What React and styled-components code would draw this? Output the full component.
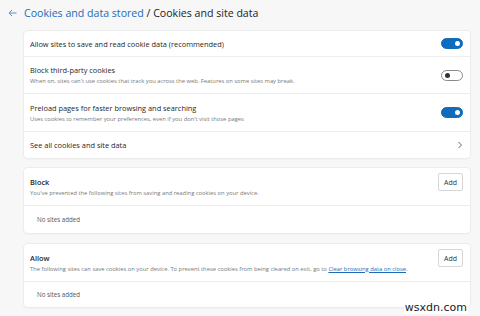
import React from "react";
import styled, { createGlobalStyle } from "styled-components";

const Global = createGlobalStyle`
  html, body {
    margin: 0;
    padding: 0;
    background: #f7f7f7;
    font-family: "Open Sans", "Noto Sans", sans-serif;
    color: #1b1b1b;
  }
  * { box-sizing: border-box; }
`;

const Page = styled.div`
  position: relative;
  width: 480px;
  height: 316px;
  overflow: hidden;
  padding: 0 10px 0 24px;
  display: flex;
  flex-direction: column;
`;

const Header = styled.div`
  height: 31px;
  display: flex;
  align-items: center;
  gap: 7px;
  margin-left: -16px;
  padding-bottom: 6px;
  font-size: 10.6px;
`;

const Back = styled.span`
  width: 9px;
  display: flex;
`;

const Crumb = styled.span`
  color: #1a6cb6;
`;

const Current = styled.span`
  color: #222;
`;

const Card = styled.div`
  background: #fff;
  border-radius: 4px;
  box-shadow: 0 0 0 1px #ececec, 0 1px 2px rgba(0, 0, 0, 0.08);
  display: flex;
  flex-direction: column;
  margin-bottom: ${(p) => p.$mb || 0}px;
`;

const Row = styled.div`
  height: ${(p) => p.$h}px;
  display: flex;
  align-items: center;
  justify-content: space-between;
  padding: 0 7px 0 6px;
  border-bottom: ${(p) => (p.$last ? "none" : "1px solid #ededed")};
`;

const Texts = styled.div`
  display: flex;
  flex-direction: column;
  gap: 2px;
`;

const Title = styled.div`
  font-size: 7.4px;
  color: #1f1f1f;
  font-weight: ${(p) => (p.$bold ? 600 : 400)};
`;

const Sub = styled.div`
  font-size: 5.8px;
  color: #777;
  white-space: nowrap;
`;

const Link = styled.a`
  color: #1a6cb6;
  text-decoration: underline;
`;

const Empty = styled.div`
  font-size: 6.2px;
  color: #555;
  padding-left: 7px;
`;

const Toggle = styled.div`
  width: 22px;
  height: 11px;
  border-radius: 6px;
  display: flex;
  align-items: center;
  justify-content: ${(p) => (p.$on ? "flex-end" : "flex-start")};
  padding: 0 2.5px;
  background: ${(p) => (p.$on ? "#0f6cbd" : "#fff")};
  border: 1px solid ${(p) => (p.$on ? "#0f6cbd" : "#8a8a8a")};
  &::after {
    content: "";
    width: 5px;
    height: 5px;
    border-radius: 50%;
    background: ${(p) => (p.$on ? "#fff" : "#333")};
  }
`;

const AddBtn = styled.button`
  font-family: inherit;
  font-size: 7px;
  color: #333;
  background: #fff;
  border: 1px solid #d6d6d6;
  border-radius: 2px;
  width: 25px;
  height: 18px;
  padding: 0;
  align-self: flex-start;
  margin-top: 5px;
`;

const Watermark = styled.div`
  position: absolute;
  right: 12px;
  bottom: 2px;
  font-family: "DejaVu Sans", sans-serif;
  font-size: 11px;
  color: #222;
  background: rgba(255, 255, 255, 0.85);
  padding: 0 1px;
`;

const Chevron = () => (
  <svg width="6" height="8" viewBox="0 0 6 8">
    <path d="M1.5 1 L4.5 4 L1.5 7" fill="none" stroke="#555" strokeWidth="0.9" />
  </svg>
);

export default function App() {
  return (
    <Page>
      <Global />
      <Header>
        <Back>
          <svg width="9" height="8" viewBox="0 0 9 8">
            <path d="M8.5 4 H1 M4 1 L1 4 L4 7" fill="none" stroke="#5a8fc8" strokeWidth="1" />
          </svg>
        </Back>
        <span>
          <Crumb>Cookies and data stored</Crumb>
          <Current> / Cookies and site data</Current>
        </span>
      </Header>

      <Card $mb={10}>
        <Row $h={26}>
          <Title>Allow sites to save and read cookie data (recommended)</Title>
          <Toggle $on />
        </Row>
        <Row $h={37}>
          <Texts>
            <Title>Block third-party cookies</Title>
            <Sub>When on, sites can't use cookies that track you across the web. Features on some sites may break.</Sub>
          </Texts>
          <Toggle />
        </Row>
        <Row $h={38}>
          <Texts>
            <Title>Preload pages for faster browsing and searching</Title>
            <Sub>Uses cookies to remember your preferences, even if you don't visit those pages</Sub>
          </Texts>
          <Toggle $on />
        </Row>
        <Row $h={26} $last>
          <Title>See all cookies and site data</Title>
          <Chevron />
        </Row>
      </Card>

      <Card $mb={11}>
        <Row $h={38}>
          <Texts>
            <Title $bold>Block</Title>
            <Sub>You've prevented the following sites from saving and reading cookies on your device.</Sub>
          </Texts>
          <AddBtn>Add</AddBtn>
        </Row>
        <Row $h={27} $last>
          <Empty>No sites added</Empty>
        </Row>
      </Card>

      <Card>
        <Row $h={38}>
          <Texts>
            <Title $bold>Allow</Title>
            <Sub>
              The following sites can save cookies on your device. To prevent these cookies from being cleared on exit, go to{" "}
              <Link>Clear browsing data on close</Link>.
            </Sub>
          </Texts>
          <AddBtn>Add</AddBtn>
        </Row>
        <Row $h={25} $last>
          <Empty>No sites added</Empty>
        </Row>
      </Card>

      <Watermark>wsxdn.com</Watermark>
    </Page>
  );
}
